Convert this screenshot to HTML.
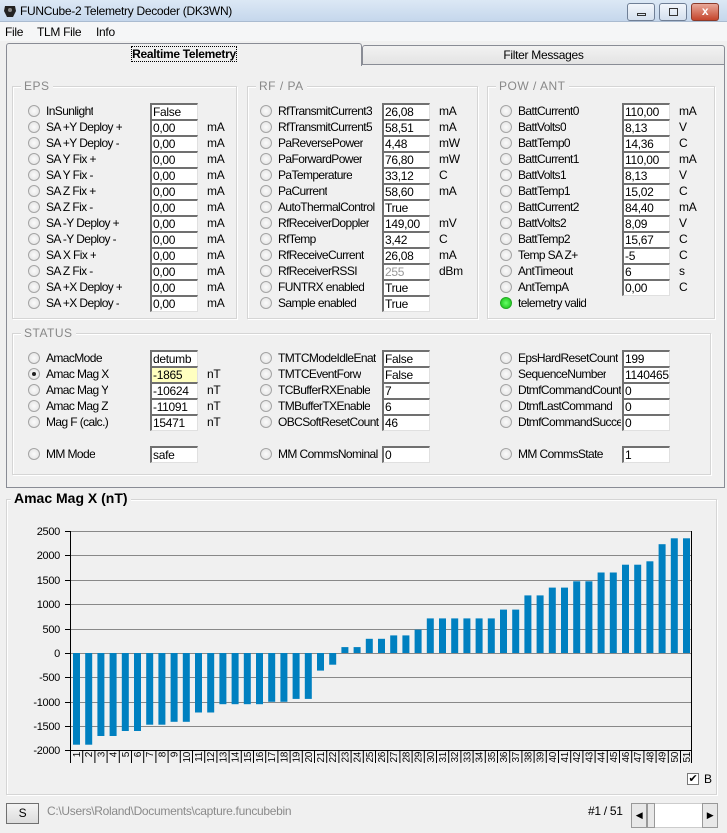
<!DOCTYPE html>
<html><head><meta charset="utf-8"><style>
*{margin:0;padding:0;box-sizing:border-box}
body{width:727px;height:833px;background:#f0f0f0;font-family:"Liberation Sans",sans-serif;font-size:12px;color:#000;position:relative;overflow:hidden;letter-spacing:-0.3px}
.a{position:absolute}
.title{left:0;top:0;width:727px;height:22px;background:linear-gradient(#dce8f5,#c5d7ec);border-bottom:1px solid #aabbd0}
.title span{position:absolute;left:20px;top:4px;font-size:12px}
.wb{top:3px;height:18px;border:1px solid #6f7f96;border-radius:3px;background:linear-gradient(#f2f6fb,#d4e0ee)}
.menu{left:0;top:22px;width:727px;height:19px;background:#f5f6f7}
.menu span{position:absolute;top:3px}
.grp{position:absolute;border:1px solid #d5d5d5;box-shadow:inset 1px 1px 0 #fff,1px 1px 0 #fff}
.gt{position:absolute;top:-8px;left:8px;background:#f0f0f0;padding:0 3px;color:#888;font-size:12px;letter-spacing:0.5px}
.row{position:absolute;height:16px;width:220px}
.r{position:absolute;left:-6px;top:2px;width:12px;height:12px;border-radius:50%;border:1px solid #a4a4a4;background:radial-gradient(#fbfbfb,#e0e0e0)}
.r.s::after{content:"";position:absolute;left:3px;top:3px;width:4px;height:4px;border-radius:50%;background:#222}
.r.g{background:radial-gradient(#6f6,#1b1);border-color:#2a2}
.l{position:absolute;left:12px;top:1px;white-space:nowrap;letter-spacing:-0.6px;max-width:103px;overflow:hidden}
.t{position:absolute;left:116px;top:0;width:48px;height:17px;background:#fff;border-top:2px solid #707070;border-left:2px solid #707070;border-right:1px solid #e0e0e0;border-bottom:1px solid #e0e0e0;padding-left:1px;line-height:15px;overflow:hidden;white-space:nowrap}
.u{position:absolute;left:173px;top:1px}
</style></head><body>
<div class="a title"><svg class="a" style="left:3px;top:4px" width="14" height="14"><path d="M2 2h10l1 5-3 6H4L1 7z" fill="#222"/><circle cx="7" cy="6" r="2" fill="#888"/></svg><span>FUNCube-2 Telemetry Decoder (DK3WN)</span></div>
<div class="a wb" style="left:627px;width:28px"><div class="a" style="left:9px;top:9px;width:9px;height:3px;border:1px solid #333"></div></div>
<div class="a wb" style="left:659px;width:28px"><div class="a" style="left:9px;top:4px;width:9px;height:8px;border:1px solid #333"></div></div>
<div class="a wb" style="left:691px;width:28px;background:linear-gradient(#e8a899,#c5452c);border-color:#8a3a2a;color:#fff;font-weight:bold;text-align:center;line-height:15px">x</div>
<div class="a menu"><span style="left:5px">File</span><span style="left:37px">TLM File</span><span style="left:96px">Info</span></div>
<div class="a" style="left:6px;top:64px;width:719px;height:424px;border:1px solid #898c95;background:#f0f0f0"></div>
<div class="a" style="left:362px;top:45px;width:363px;height:20px;border:1px solid #898c95;border-radius:3px 3px 0 0;background:linear-gradient(#f2f2f2,#e3e3e3);text-align:center;line-height:18px">Filter Messages</div>
<div class="a" style="left:6px;top:43px;width:356px;height:23px;border:1px solid #898c95;border-bottom:none;border-radius:3px 3px 0 0;background:#f0f0f0;text-align:center;line-height:20px"><span style="font-weight:bold;outline:1px dotted #000">Realtime Telemetry</span></div>

<div class="grp" style="left:12px;top:86px;width:225px;height:233px"><div class="gt">EPS</div></div>
<div class="grp" style="left:247px;top:86px;width:231px;height:233px"><div class="gt">RF / PA</div></div>
<div class="grp" style="left:487px;top:86px;width:228px;height:233px"><div class="gt">POW / ANT</div></div>

<div class="row" style="left:34px;top:103px"><i class="r"></i><span class="l">InSunlight</span><span class="t">False</span></div>
<div class="row" style="left:34px;top:119px"><i class="r"></i><span class="l">SA +Y Deploy +</span><span class="t">0,00</span><span class="u">mA</span></div>
<div class="row" style="left:34px;top:135px"><i class="r"></i><span class="l">SA +Y Deploy -</span><span class="t">0,00</span><span class="u">mA</span></div>
<div class="row" style="left:34px;top:151px"><i class="r"></i><span class="l">SA Y Fix +</span><span class="t">0,00</span><span class="u">mA</span></div>
<div class="row" style="left:34px;top:167px"><i class="r"></i><span class="l">SA Y Fix -</span><span class="t">0,00</span><span class="u">mA</span></div>
<div class="row" style="left:34px;top:183px"><i class="r"></i><span class="l">SA Z Fix +</span><span class="t">0,00</span><span class="u">mA</span></div>
<div class="row" style="left:34px;top:199px"><i class="r"></i><span class="l">SA Z Fix -</span><span class="t">0,00</span><span class="u">mA</span></div>
<div class="row" style="left:34px;top:215px"><i class="r"></i><span class="l">SA -Y Deploy +</span><span class="t">0,00</span><span class="u">mA</span></div>
<div class="row" style="left:34px;top:231px"><i class="r"></i><span class="l">SA -Y Deploy -</span><span class="t">0,00</span><span class="u">mA</span></div>
<div class="row" style="left:34px;top:247px"><i class="r"></i><span class="l">SA X Fix +</span><span class="t">0,00</span><span class="u">mA</span></div>
<div class="row" style="left:34px;top:263px"><i class="r"></i><span class="l">SA Z Fix -</span><span class="t">0,00</span><span class="u">mA</span></div>
<div class="row" style="left:34px;top:279px"><i class="r"></i><span class="l">SA +X Deploy +</span><span class="t">0,00</span><span class="u">mA</span></div>
<div class="row" style="left:34px;top:295px"><i class="r"></i><span class="l">SA +X Deploy -</span><span class="t">0,00</span><span class="u">mA</span></div>

<div class="row" style="left:266px;top:103px"><i class="r"></i><span class="l">RfTransmitCurrent3</span><span class="t">26,08</span><span class="u">mA</span></div>
<div class="row" style="left:266px;top:119px"><i class="r"></i><span class="l">RfTransmitCurrent5</span><span class="t">58,51</span><span class="u">mA</span></div>
<div class="row" style="left:266px;top:135px"><i class="r"></i><span class="l">PaReversePower</span><span class="t">4,48</span><span class="u">mW</span></div>
<div class="row" style="left:266px;top:151px"><i class="r"></i><span class="l">PaForwardPower</span><span class="t">76,80</span><span class="u">mW</span></div>
<div class="row" style="left:266px;top:167px"><i class="r"></i><span class="l">PaTemperature</span><span class="t">33,12</span><span class="u">C</span></div>
<div class="row" style="left:266px;top:183px"><i class="r"></i><span class="l">PaCurrent</span><span class="t">58,60</span><span class="u">mA</span></div>
<div class="row" style="left:266px;top:199px"><i class="r"></i><span class="l">AutoThermalControl</span><span class="t">True</span></div>
<div class="row" style="left:266px;top:215px"><i class="r"></i><span class="l">RfReceiverDoppler</span><span class="t">149,00</span><span class="u">mV</span></div>
<div class="row" style="left:266px;top:231px"><i class="r"></i><span class="l">RfTemp</span><span class="t">3,42</span><span class="u">C</span></div>
<div class="row" style="left:266px;top:247px"><i class="r"></i><span class="l">RfReceiveCurrent</span><span class="t">26,08</span><span class="u">mA</span></div>
<div class="row" style="left:266px;top:263px"><i class="r"></i><span class="l">RfReceiverRSSI</span><span class="t" style="color:#999">255</span><span class="u">dBm</span></div>
<div class="row" style="left:266px;top:279px"><i class="r"></i><span class="l">FUNTRX enabled</span><span class="t">True</span></div>
<div class="row" style="left:266px;top:295px"><i class="r"></i><span class="l">Sample enabled</span><span class="t">True</span></div>

<div class="row" style="left:506px;top:103px"><i class="r"></i><span class="l">BattCurrent0</span><span class="t">110,00</span><span class="u">mA</span></div>
<div class="row" style="left:506px;top:119px"><i class="r"></i><span class="l">BattVolts0</span><span class="t">8,13</span><span class="u">V</span></div>
<div class="row" style="left:506px;top:135px"><i class="r"></i><span class="l">BattTemp0</span><span class="t">14,36</span><span class="u">C</span></div>
<div class="row" style="left:506px;top:151px"><i class="r"></i><span class="l">BattCurrent1</span><span class="t">110,00</span><span class="u">mA</span></div>
<div class="row" style="left:506px;top:167px"><i class="r"></i><span class="l">BattVolts1</span><span class="t">8,13</span><span class="u">V</span></div>
<div class="row" style="left:506px;top:183px"><i class="r"></i><span class="l">BattTemp1</span><span class="t">15,02</span><span class="u">C</span></div>
<div class="row" style="left:506px;top:199px"><i class="r"></i><span class="l">BattCurrent2</span><span class="t">84,40</span><span class="u">mA</span></div>
<div class="row" style="left:506px;top:215px"><i class="r"></i><span class="l">BattVolts2</span><span class="t">8,09</span><span class="u">V</span></div>
<div class="row" style="left:506px;top:231px"><i class="r"></i><span class="l">BattTemp2</span><span class="t">15,67</span><span class="u">C</span></div>
<div class="row" style="left:506px;top:247px"><i class="r"></i><span class="l">Temp SA Z+</span><span class="t">-5</span><span class="u">C</span></div>
<div class="row" style="left:506px;top:263px"><i class="r"></i><span class="l">AntTimeout</span><span class="t">6</span><span class="u">s</span></div>
<div class="row" style="left:506px;top:279px"><i class="r"></i><span class="l">AntTempA</span><span class="t">0,00</span><span class="u">C</span></div>
<div class="row" style="left:506px;top:295px"><i class="r g"></i><span class="l">telemetry valid</span></div>

<div class="grp" style="left:12px;top:333px;width:699px;height:142px"><div class="gt">STATUS</div></div>
<div class="row" style="left:34px;top:350px"><i class="r"></i><span class="l">AmacMode</span><span class="t">detumb</span></div>
<div class="row" style="left:34px;top:366px"><i class="r s"></i><span class="l">Amac Mag X</span><span class="t" style="background:#ffffc0">-1865</span><span class="u">nT</span></div>
<div class="row" style="left:34px;top:382px"><i class="r"></i><span class="l">Amac Mag Y</span><span class="t">-10624</span><span class="u">nT</span></div>
<div class="row" style="left:34px;top:398px"><i class="r"></i><span class="l">Amac Mag Z</span><span class="t">-11091</span><span class="u">nT</span></div>
<div class="row" style="left:34px;top:414px"><i class="r"></i><span class="l">Mag F (calc.)</span><span class="t">15471</span><span class="u">nT</span></div>
<div class="row" style="left:34px;top:446px"><i class="r"></i><span class="l">MM Mode</span><span class="t">safe</span></div>
<div class="row" style="left:266px;top:350px"><i class="r"></i><span class="l">TMTCModeIdleEnat</span><span class="t">False</span></div>
<div class="row" style="left:266px;top:366px"><i class="r"></i><span class="l">TMTCEventForw</span><span class="t">False</span></div>
<div class="row" style="left:266px;top:382px"><i class="r"></i><span class="l">TCBufferRXEnable</span><span class="t">7</span></div>
<div class="row" style="left:266px;top:398px"><i class="r"></i><span class="l">TMBufferTXEnable</span><span class="t">6</span></div>
<div class="row" style="left:266px;top:414px"><i class="r"></i><span class="l">OBCSoftResetCount</span><span class="t">46</span></div>
<div class="row" style="left:266px;top:446px"><i class="r"></i><span class="l">MM CommsNominal</span><span class="t">0</span></div>
<div class="row" style="left:506px;top:350px"><i class="r"></i><span class="l">EpsHardResetCount</span><span class="t">199</span></div>
<div class="row" style="left:506px;top:366px"><i class="r"></i><span class="l">SequenceNumber</span><span class="t">1140465</span></div>
<div class="row" style="left:506px;top:382px"><i class="r"></i><span class="l">DtmfCommandCount</span><span class="t">0</span></div>
<div class="row" style="left:506px;top:398px"><i class="r"></i><span class="l">DtmfLastCommand</span><span class="t">0</span></div>
<div class="row" style="left:506px;top:414px"><i class="r"></i><span class="l">DtmfCommandSucce</span><span class="t">0</span></div>
<div class="row" style="left:506px;top:446px"><i class="r"></i><span class="l">MM CommsState</span><span class="t">1</span></div>

<div class="grp" style="left:6px;top:499px;width:711px;height:296px"><div class="gt" style="color:#000;font-weight:bold;font-size:14px;top:-10px;left:4px;letter-spacing:0">Amac Mag X (nT)</div></div>
<svg class="a" style="left:0;top:0" width="727" height="833" font-family="Liberation Sans,sans-serif" font-size="11">
<g stroke="#888" stroke-width="1">
<path d="M70 531.5H692M70 555.5H692M70 580.5H692M70 604.5H692M70 629.5H692M70 653.5H692M70 677.5H692M70 702.5H692M70 726.5H692"/>
</g>
<g fill="#000" text-anchor="end">
<text x="60" y="535">2500</text><text x="60" y="559">2000</text><text x="60" y="584">1500</text><text x="60" y="608">1000</text><text x="60" y="633">500</text><text x="60" y="657">0</text><text x="60" y="681">-500</text><text x="60" y="706">-1000</text><text x="60" y="730">-1500</text><text x="60" y="754">-2000</text>
</g>
<g stroke="#000"><path d="M65 531.5H70M65 555.5H70M65 580.5H70M65 604.5H70M65 629.5H70M65 653.5H70M65 677.5H70M65 702.5H70M65 726.5H70M65 750.5H70"/><path d="M70.5 531V751M691.5 531V751M70 750.5H692"/></g>
<g fill="#0080c0">
<rect x="73" y="653" width="7" height="91.7"/><rect x="85.2" y="653" width="7" height="91.7"/>
<rect x="97.4" y="653" width="7" height="83"/><rect x="109.6" y="653" width="7" height="83"/>
<rect x="121.8" y="653" width="7" height="78"/><rect x="134" y="653" width="7" height="78"/>
<rect x="146.2" y="653" width="7" height="71.7"/><rect x="158.4" y="653" width="7" height="71.7"/>
<rect x="170.6" y="653" width="7" height="68.8"/><rect x="182.8" y="653" width="7" height="68.8"/>
<rect x="195" y="653" width="7" height="59.5"/><rect x="207.2" y="653" width="7" height="59.5"/>
<rect x="219.4" y="653" width="7" height="51.2"/><rect x="231.6" y="653" width="7" height="51.2"/><rect x="243.8" y="653" width="7" height="51.2"/><rect x="256" y="653" width="7" height="51.2"/>
<rect x="268.2" y="653" width="7" height="48.8"/><rect x="280.4" y="653" width="7" height="48.8"/>
<rect x="292.6" y="653" width="7" height="45.9"/><rect x="304.8" y="653" width="7" height="45.9"/>
<rect x="317" y="653" width="7" height="17.6"/><rect x="329.2" y="653" width="7" height="11.7"/>
<rect x="341.4" y="647.1" width="7" height="5.9"/><rect x="353.6" y="647.1" width="7" height="5.9"/>
<rect x="365.8" y="638.8" width="7" height="14.2"/><rect x="378" y="638.8" width="7" height="14.2"/>
<rect x="390.2" y="635.4" width="7" height="17.6"/><rect x="402.4" y="635.4" width="7" height="17.6"/>
<rect x="414.6" y="629.6" width="7" height="23.4"/>
<rect x="426.8" y="618.4" width="7" height="34.6"/><rect x="439" y="618.4" width="7" height="34.6"/><rect x="451.2" y="618.4" width="7" height="34.6"/><rect x="463.4" y="618.4" width="7" height="34.6"/><rect x="475.6" y="618.4" width="7" height="34.6"/><rect x="487.8" y="618.4" width="7" height="34.6"/>
<rect x="500" y="609.6" width="7" height="43.4"/><rect x="512.2" y="609.6" width="7" height="43.4"/>
<rect x="524.4" y="595.4" width="7" height="57.6"/><rect x="536.6" y="595.4" width="7" height="57.6"/>
<rect x="548.8" y="587.6" width="7" height="65.4"/><rect x="561" y="587.6" width="7" height="65.4"/>
<rect x="573.2" y="581.3" width="7" height="71.7"/><rect x="585.4" y="581.3" width="7" height="71.7"/>
<rect x="597.6" y="572.5" width="7" height="80.5"/><rect x="609.8" y="572.5" width="7" height="80.5"/>
<rect x="622" y="564.7" width="7" height="88.3"/><rect x="634.2" y="564.7" width="7" height="88.3"/>
<rect x="646.4" y="561.3" width="7" height="91.7"/>
<rect x="658.6" y="544.2" width="7" height="108.8"/>
<rect x="670.8" y="538.3" width="7" height="114.7"/><rect x="683" y="538.3" width="7" height="114.7"/>
</g>
<g stroke="#000"><path d="M70.5 750v13M82.7 750v13M94.9 750v13M107.1 750v13M119.3 750v13M131.5 750v13M143.7 750v13M155.9 750v13M168.1 750v13M180.3 750v13M192.5 750v13M204.7 750v13M216.9 750v13M229.1 750v13M241.3 750v13M253.5 750v13M265.7 750v13M277.9 750v13M290.1 750v13M302.3 750v13M314.5 750v13M326.7 750v13M338.9 750v13M351.1 750v13M363.3 750v13M375.5 750v13M387.7 750v13M399.9 750v13M412.1 750v13M424.3 750v13M436.5 750v13M448.7 750v13M460.9 750v13M473.1 750v13M485.3 750v13M497.5 750v13M509.7 750v13M521.9 750v13M534.1 750v13M546.3 750v13M558.5 750v13M570.7 750v13M582.9 750v13M595.1 750v13M607.3 750v13M619.5 750v13M631.7 750v13M643.9 750v13M656.1 750v13M668.3 750v13M680.5 750v13M691.5 750v13"/></g>
<g font-size="10" text-anchor="end">
<text transform="translate(80,752) rotate(-90)">1</text><text transform="translate(92.2,752) rotate(-90)">2</text><text transform="translate(104.4,752) rotate(-90)">3</text><text transform="translate(116.6,752) rotate(-90)">4</text><text transform="translate(128.8,752) rotate(-90)">5</text><text transform="translate(141,752) rotate(-90)">6</text><text transform="translate(153.2,752) rotate(-90)">7</text><text transform="translate(165.4,752) rotate(-90)">8</text><text transform="translate(177.6,752) rotate(-90)">9</text><text transform="translate(189.8,752) rotate(-90)">10</text><text transform="translate(202,752) rotate(-90)">11</text><text transform="translate(214.2,752) rotate(-90)">12</text><text transform="translate(226.4,752) rotate(-90)">13</text><text transform="translate(238.6,752) rotate(-90)">14</text><text transform="translate(250.8,752) rotate(-90)">15</text><text transform="translate(263,752) rotate(-90)">16</text><text transform="translate(275.2,752) rotate(-90)">17</text><text transform="translate(287.4,752) rotate(-90)">18</text><text transform="translate(299.6,752) rotate(-90)">19</text><text transform="translate(311.8,752) rotate(-90)">20</text><text transform="translate(324,752) rotate(-90)">21</text><text transform="translate(336.2,752) rotate(-90)">22</text><text transform="translate(348.4,752) rotate(-90)">23</text><text transform="translate(360.6,752) rotate(-90)">24</text><text transform="translate(372.8,752) rotate(-90)">25</text><text transform="translate(385,752) rotate(-90)">26</text><text transform="translate(397.2,752) rotate(-90)">27</text><text transform="translate(409.4,752) rotate(-90)">28</text><text transform="translate(421.6,752) rotate(-90)">29</text><text transform="translate(433.8,752) rotate(-90)">30</text><text transform="translate(446,752) rotate(-90)">31</text><text transform="translate(458.2,752) rotate(-90)">32</text><text transform="translate(470.4,752) rotate(-90)">33</text><text transform="translate(482.6,752) rotate(-90)">34</text><text transform="translate(494.8,752) rotate(-90)">35</text><text transform="translate(507,752) rotate(-90)">36</text><text transform="translate(519.2,752) rotate(-90)">37</text><text transform="translate(531.4,752) rotate(-90)">38</text><text transform="translate(543.6,752) rotate(-90)">39</text><text transform="translate(555.8,752) rotate(-90)">40</text><text transform="translate(568,752) rotate(-90)">41</text><text transform="translate(580.2,752) rotate(-90)">42</text><text transform="translate(592.4,752) rotate(-90)">43</text><text transform="translate(604.6,752) rotate(-90)">44</text><text transform="translate(616.8,752) rotate(-90)">45</text><text transform="translate(629,752) rotate(-90)">46</text><text transform="translate(641.2,752) rotate(-90)">47</text><text transform="translate(653.4,752) rotate(-90)">48</text><text transform="translate(665.6,752) rotate(-90)">49</text><text transform="translate(677.8,752) rotate(-90)">50</text><text transform="translate(690,752) rotate(-90)">51</text>
</g>
</svg>
<div class="a" style="left:687px;top:773px;width:12px;height:12px;border:1px solid #777;background:#fff;font-size:11px;line-height:10px;text-align:center">✔</div>
<div class="a" style="left:704px;top:772px">B</div>
<div class="a" style="left:6px;top:803px;width:33px;height:21px;border:1px solid #707070;background:linear-gradient(#f4f4f4,#dcdcdc);text-align:center;line-height:19px">S</div>
<div class="a" style="left:47px;top:804px;color:#8a8a8a">C:\Users\Roland\Documents\capture.funcubebin</div>
<div class="a" style="left:588px;top:804px">#1 / 51</div>
<div class="a" style="left:631px;top:803px;width:87px;height:25px;background:#fff;border:1px solid #ccc"></div>
<div class="a" style="left:631px;top:803px;width:16px;height:25px;background:#e8e8e8;border:1px solid #999;text-align:center;line-height:23px;font-size:9px">◀</div>
<div class="a" style="left:647px;top:803px;width:8px;height:25px;background:#e8e8e8;border:1px solid #999"></div>
<div class="a" style="left:702px;top:803px;width:16px;height:25px;background:#e8e8e8;border:1px solid #999;text-align:center;line-height:23px;font-size:9px">▶</div>
</body></html>
